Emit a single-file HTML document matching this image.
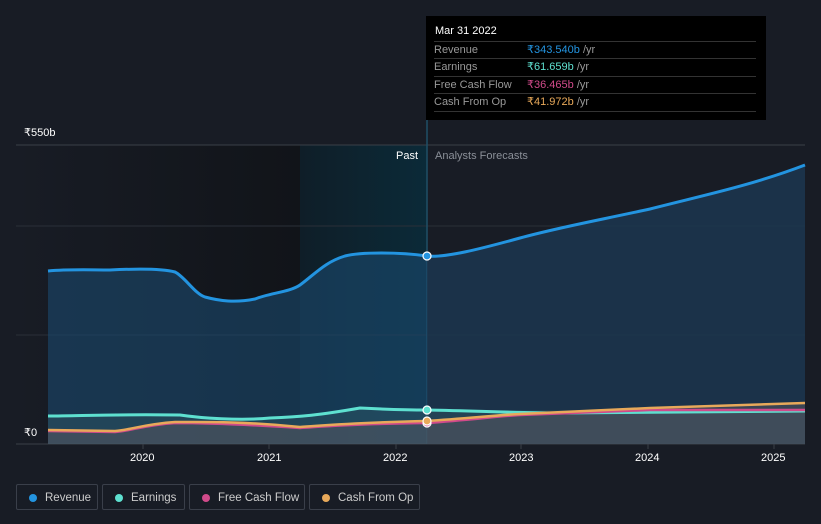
<!DOCTYPE html>
<html><head><meta charset="utf-8"><style>
body{margin:0;width:821px;height:524px;background:#181c25;font-family:"Liberation Sans",sans-serif;overflow:hidden;position:relative}
.t{position:absolute;font-size:11px}
.tip{position:absolute;left:426px;top:16px;width:340px;height:104px;background:#000;}
.tip .h{position:absolute;left:9px;top:9px;color:#fff;font-size:11px}
.row{position:absolute;left:8px;width:322px;border-top:1px solid #333;height:16px;font-size:11px;color:#999}
.row span{position:absolute;left:93px}
.leg{position:absolute;top:484px;height:26px;border:1px solid #3a3f4a;border-radius:2px;color:#ccc;font-size:11.5px;line-height:26px;box-sizing:border-box}
.leg i{position:absolute;left:12px;top:9px;width:8px;height:8px;border-radius:50%}
.leg b{font-weight:normal;position:absolute;left:28px}
</style></head><body>
<svg width="821" height="524" style="position:absolute;left:0;top:0">
<defs>
<linearGradient id="dk" x1="0" x2="1"><stop offset="0" stop-color="#181c25"/><stop offset="1" stop-color="#111419"/></linearGradient>
<linearGradient id="tl" x1="0" x2="1"><stop offset="0" stop-color="#0f1e28"/><stop offset="1" stop-color="#0b2a38"/></linearGradient>
<clipPath id="past"><rect x="0" y="0" width="427" height="524"/></clipPath>
<clipPath id="fut"><rect x="427" y="0" width="400" height="524"/></clipPath>
</defs>
<rect x="16" y="145" width="284" height="299" fill="url(#dk)"/>
<rect x="300" y="145" width="127" height="299" fill="url(#tl)"/>
<line x1="16" y1="145" x2="805" y2="145" stroke="#3a3f48"/>
<line x1="16" y1="226" x2="805" y2="226" stroke="#2a2f38"/>
<line x1="16" y1="335" x2="805" y2="335" stroke="#2a2f38"/>
<line x1="16" y1="444" x2="805" y2="444" stroke="#3a3f48"/>
<line x1="427" y1="120" x2="427" y2="444" stroke="#1f4f66" stroke-width="1.5"/>
<g id="rev"><path d="M48,271 C70,269 90,270 110,270 C130,269 160,268 175,272 C185,277 195,294 205,297 C220,301 235,303 255,299 C270,293 290,292 300,285 C315,274 325,262 345,256 C360,252 400,252 427,256 C445,258 480,249 520,238 C560,227 600,220 650,209 C700,196 750,186 805,165 L805,444 L48,444Z" fill="#1a4a6e" fill-opacity="0.6" clip-path="url(#past)"/>
<path d="M48,271 C70,269 90,270 110,270 C130,269 160,268 175,272 C185,277 195,294 205,297 C220,301 235,303 255,299 C270,293 290,292 300,285 C315,274 325,262 345,256 C360,252 400,252 427,256 C445,258 480,249 520,238 C560,227 600,220 650,209 C700,196 750,186 805,165 L805,444 L48,444Z" fill="#1c3650" fill-opacity="0.85" clip-path="url(#fut)"/></g>
<path d="M48,416 C80,416 110,414 180,415 C200,418 240,421 270,418 C300,417 320,415 360,408 C380,409 400,410 427,410 L805,411 L805,444 L48,444Z" fill="#3a6a70" fill-opacity="0.3"/>
<path d="M48,430 L115,431 C130,430 145,424 175,422 C200,422 240,421 300,427 C320,426 340,423 427,421 L520,414 L650,408 L805,403 L805,444 L48,444Z" fill="#5a5560" fill-opacity="0.5"/>
<path d="M48,271 C70,269 90,270 110,270 C130,269 160,268 175,272 C185,277 195,294 205,297 C220,301 235,303 255,299 C270,293 290,292 300,285 C315,274 325,262 345,256 C360,252 400,252 427,256 C445,258 480,249 520,238 C560,227 600,220 650,209 C700,196 750,186 805,165" fill="none" stroke="#2394e0" stroke-width="3"/>
<path d="M48,416 C80,416 110,414 180,415 C200,418 240,421 270,418 C300,417 320,415 360,408 C380,409 400,410 427,410 C480,411 520,413 560,413 L805,411" fill="none" stroke="#5ee0d0" stroke-width="3"/>
<path d="M48,431 L115,432 C130,431 145,425 175,423 C200,423 240,424 300,428 C320,427 340,424 427,423 C470,420 500,416 520,415 L650,410 L805,410" fill="none" stroke="#d04a8a" stroke-width="2.5"/>
<path d="M48,430 L115,431 C130,430 145,424 175,422 C200,422 240,421 300,427 C320,426 340,423 427,421 C470,418 500,415 520,414 L650,408 L805,403" fill="none" stroke="#e8a95a" stroke-width="2.5"/>
<circle cx="427" cy="256" r="4" fill="#2394e0" stroke="#fff" stroke-width="1.2"/>
<circle cx="427" cy="410" r="4" fill="#5ee0d0" stroke="#fff" stroke-width="1.2"/>
<circle cx="427" cy="423" r="4" fill="#d04a8a" stroke="#fff" stroke-width="1.2"/>
<circle cx="427" cy="421" r="4" fill="#e8a95a" stroke="#fff" stroke-width="1.2"/>
<g stroke="#3a3f48"><line x1="143" y1="444" x2="143" y2="449"/><line x1="269" y1="444" x2="269" y2="449"/><line x1="396" y1="444" x2="396" y2="449"/><line x1="521" y1="444" x2="521" y2="449"/><line x1="648" y1="444" x2="648" y2="449"/><line x1="774" y1="444" x2="774" y2="449"/></g>
</svg>
<div class="t" style="left:24px;top:126px;color:#fff">₹550b</div>
<div class="t" style="left:24px;top:426px;color:#fff">₹0</div>
<div class="t" style="left:396px;top:150px;color:#fff">Past</div>
<div class="t" style="left:435px;top:150px;color:#8a8f98">Analysts Forecasts</div>
<div class="t" style="left:130px;top:452px;color:#fff">2020</div>
<div class="t" style="left:257px;top:452px;color:#fff">2021</div>
<div class="t" style="left:383px;top:452px;color:#fff">2022</div>
<div class="t" style="left:509px;top:452px;color:#fff">2023</div>
<div class="t" style="left:635px;top:452px;color:#fff">2024</div>
<div class="t" style="left:761px;top:452px;color:#fff">2025</div>
<div class="tip"><div class="h">Mar 31 2022</div>
<div class="row" style="top:25px;line-height:16px">Revenue<span><font color="#2394e0">₹343.540b</font> /yr</span></div>
<div class="row" style="top:42px;line-height:16px">Earnings<span><font color="#5ee0d0">₹61.659b</font> /yr</span></div>
<div class="row" style="top:60px;line-height:16px">Free Cash Flow<span><font color="#d04a8a">₹36.465b</font> /yr</span></div>
<div class="row" style="top:77px;line-height:16px">Cash From Op<span><font color="#e8a95a">₹41.972b</font> /yr</span></div>
<div class="row" style="top:95px;height:0"></div>
</div>
<div class="leg" style="left:16px;width:82px"><i style="background:#2394e0"></i><b>Revenue</b></div>
<div class="leg" style="left:102px;width:83px"><i style="background:#5ee0d0"></i><b>Earnings</b></div>
<div class="leg" style="left:189px;width:116px"><i style="background:#d04a8a"></i><b>Free Cash Flow</b></div>
<div class="leg" style="left:309px;width:111px"><i style="background:#e8a95a"></i><b>Cash From Op</b></div>
</body></html>
